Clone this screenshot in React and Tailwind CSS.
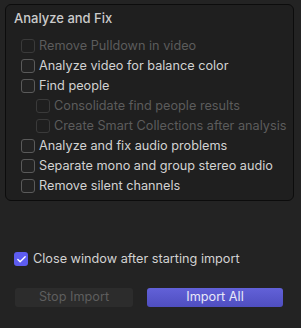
import { Check } from "lucide-react";

function Box({ checked, disabled }) {
    if (checked) {
        return (
            <span className="w-[14px] h-[14px] rounded-[3px] bg-[#5d5cf0] flex items-center justify-center shrink-0">
                <Check size={11} strokeWidth={3} color="#ffffff" />
            </span>
        )
    }
    return (
        <span className={"w-[14px] h-[14px] rounded-[3px] border shrink-0 " + (disabled ? "border-[#3a3a3a] bg-[#1f1f1f]" : "border-[#5a5a5a] bg-[#232323]")}></span>
    )
}

function Row({ label, disabled, indent }) {
    return (
        <div className={"h-5 flex items-center gap-[4px] " + (indent ? "pl-[15px]" : "")}>
            <Box disabled={disabled} />
            <span className={disabled ? "text-[#5c5c5c]" : "text-[#d2d2d2]"}>{label}</span>
        </div>
    )
}

export default function App() {
    const rows = [
        { label: "Remove Pulldown in video", disabled: true },
        { label: "Analyze video for balance color" },
        { label: "Find people" },
        { label: "Consolidate find people results", disabled: true, indent: true },
        { label: "Create Smart Collections after analysis", disabled: true, indent: true },
        { label: "Analyze and fix audio problems" },
        { label: "Separate mono and group stereo audio" },
        { label: "Remove silent channels" },
    ];

    return (
        <div className="w-[301px] h-[328px] bg-[#232323] pt-[4px] px-[5px] text-[12.7px] leading-none" style={{ fontFamily: "Inter, 'Noto Sans', sans-serif" }}>
            <div className="w-[289px] h-[197px] rounded-[6px] border border-[#0c0c0c] bg-[#1f1f1f] pt-[7px] pl-[15px]">
                <div className="-ml-[7px] text-[#cbcbcb] text-[13px] font-medium h-[12px] flex items-center">Analyze and Fix</div>
                <div className="mt-[12px] flex flex-col">
                    {rows.map(r => <Row key={r.label} {...r} />)}
                </div>
            </div>
            <div className="mt-[51px] pl-[9px] flex items-center gap-[5px]">
                <Box checked />
                <span className="text-[#d2d2d2]">Close window after starting import</span>
            </div>
            <div className="mt-[22px] pl-[10px] flex gap-[14px]">
                <button className="w-[118px] h-[19px] rounded-[3px] bg-[#2c2c2c] text-[#5e5e5e] text-[12.7px]">Stop Import</button>
                <button className="w-[136px] h-[19px] rounded-[3px] bg-gradient-to-b from-[#6261d8] to-[#4f4ec0] text-[#e8e8f8] text-[12.7px]">Import All</button>
            </div>
        </div>
    )
}
